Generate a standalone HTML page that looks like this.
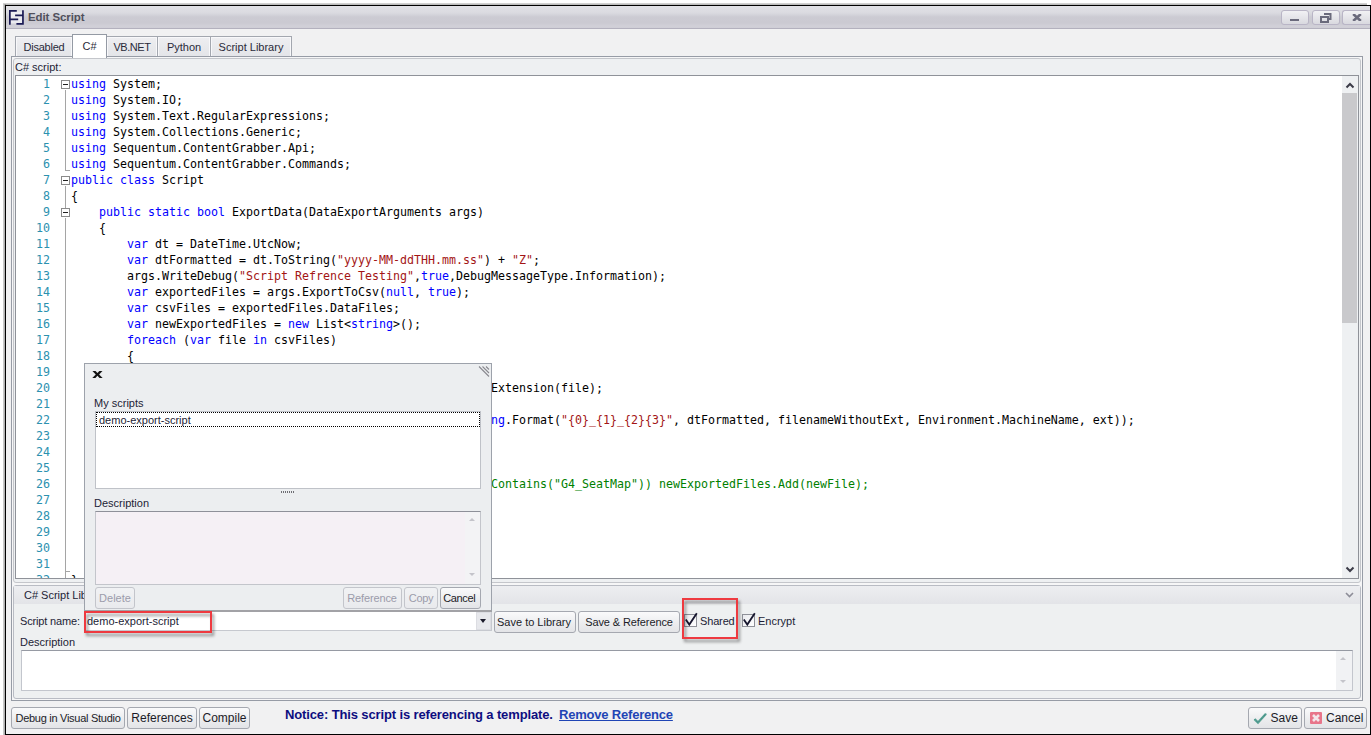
<!DOCTYPE html>
<html>
<head>
<meta charset="utf-8">
<title>Edit Script</title>
<style>
html,body{margin:0;padding:0;background:#fff;}
body{width:1371px;height:735px;position:relative;overflow:hidden;font-family:"Liberation Sans",sans-serif;font-size:11px;color:#1d1d36;}
*{box-sizing:border-box;}
.abs{position:absolute;}
#win{position:absolute;left:5px;top:5px;width:1366px;height:730px;border:1px solid #000;background:#f1f1f2;}
/* everything inside uses page coords via #page */
#page{position:absolute;left:0;top:0;width:1371px;height:735px;}
#title{left:6px;top:6px;width:1364px;height:23px;background:linear-gradient(#e2e2e7 0,#dadae0 7px,#cccbd3 11px,#cbcad2 17px,#d1d0d8 20px,#cfced6 22px);border-bottom:1px solid #b3b1be;}
#title .txt{left:22px;top:5px;font-weight:bold;font-size:11.5px;color:#50505c;letter-spacing:-0.1px;}
.cap{position:absolute;top:4px;height:15px;width:28px;border:1px solid #b9b5c6;border-radius:3px;background:linear-gradient(#f1f1f4,#d9d9df);}
.tab{position:absolute;border:1px solid #a3a7af;border-bottom:none;background:linear-gradient(#eeeef1,#e3e4e8);box-shadow:inset 1px 1px 0 #f8f8fa,inset -1px 0 0 #f8f8fa;text-align:center;color:#2a2a3a;}
.btn{position:absolute;border:1px solid #a5a8b0;border-radius:3px;background:linear-gradient(#fafafb,#ebecee 60%,#e3e4e7);text-align:center;color:#1c1c28;white-space:nowrap;}
.btn.dis{color:#9c9cab;border-color:#c3c5cb;background:linear-gradient(#f1f2f4,#e9eaed);}
#editor{left:15px;top:75px;width:1344px;height:504px;border:1px solid #8f9299;background:#fff;overflow:hidden;}
.ln,.cl{position:absolute;font-family:"DejaVu Sans Mono","Liberation Mono",monospace;font-size:11.63px;line-height:16px;height:16px;white-space:pre;}
.ln{left:0;width:34px;text-align:right;color:#2b91af;}
.cl{left:55px;color:#000;}
.fold{width:9px;height:9px;border:1px solid #8a8a8a;background:#fff;}
.fold:after{content:"";position:absolute;left:1px;top:3px;width:5px;height:1px;background:#222;}
.chk{width:13px;height:13px;border:1px solid #8e9098;background:linear-gradient(135deg,#e9eaee,#fff);}
.redbox{position:absolute;border:2px solid #ee3a40;filter:drop-shadow(2px 3px 1.5px rgba(0,0,0,.42));}
.t{white-space:nowrap;}
.kw{color:#0000ff;}
.s{color:#a31515;}
.c{color:#008000;}
</style>
</head>
<body>
<div class="abs" style="left:3px;top:3px;width:1364px;height:3px;background:linear-gradient(#dcdcdc,#9c9c9c);"></div><div class="abs" style="left:3px;top:4px;width:3px;height:731px;background:linear-gradient(90deg,#d4d4d4,#8c8c8c);"></div>
<div id="win"></div>
<div id="page">
  <!-- title bar -->
  <div id="title" class="abs">
    <svg class="abs" style="left:3px;top:4px" width="16" height="16" viewBox="0 0 16 16"><rect x="1.5" y="1.5" width="12" height="12" fill="#f4f4f8" opacity=".75"/><path d="M0 0.8H7.8 M0.85 0V14.7 M6.1 5.35H14.8 M0.8 9.45H9.2 M13.95 0.3V14.7 M7.4 13.95H14.8" fill="none" stroke="#1a1a55" stroke-width="1.7"/></svg>
    <div class="abs txt">Edit Script</div>
    <div class="cap" style="left:1275px"><div class="abs" style="left:8px;top:8px;width:9px;height:2px;background:#6a6a7c"></div></div>
    <div class="cap" style="left:1305.5px">
      <svg class="abs" style="left:7px;top:1.5px" width="12" height="10" viewBox="0 0 12 10"><path d="M4 1H10.5V6H8.5 M1 4H8V9H1Z" fill="none" stroke="#6a6a7c" stroke-width="2"/></svg>
    </div>
    <div class="cap" style="left:1336px;border-right:none;border-radius:3px 0 0 3px;">
      <svg class="abs" style="left:8.5px;top:3px" width="10" height="7" viewBox="0 0 10 7"><path d="M1.2 0L8.8 7M8.8 0L1.2 7" fill="none" stroke="#6a6a7c" stroke-width="2.6"/></svg>
    </div>
  </div>

  <!-- tabs -->
  <div class="tab" style="left:15px;top:36px;width:58px;height:21px;line-height:20px;letter-spacing:-0.25px;">Disabled</div>
  <div class="tab" style="left:106px;top:36px;width:52px;height:21px;line-height:20px;letter-spacing:-0.45px;">VB.NET</div>
  <div class="tab" style="left:157px;top:36px;width:54px;height:21px;line-height:20px;">Python</div>
  <div class="tab" style="left:210px;top:36px;width:82px;height:21px;line-height:20px;">Script Library</div>
  <!-- tab panel -->
  <div class="abs" style="left:11px;top:56px;width:1352px;height:645px;border:1px solid #979ca6;background:#f6f6f7;"></div>
  <div class="abs" style="left:13px;top:58px;width:1348px;height:525px;border:1px solid #c4c6cb;border-radius:3px;background:#eef0f2;"></div>
  <div class="tab" style="left:72px;top:34px;width:35px;height:24px;line-height:22px;background:#fff;box-shadow:none;border-color:#949aa4;">C#</div>
  <div class="abs" style="left:15px;top:61px;">C# script:</div>

  <!-- editor -->
  <div id="editor" class="abs">
    <div class="abs" id="codewrap" style="left:0;top:0px;width:1326px;height:502px;overflow:hidden">
<div class="ln" style="top:0px">1</div><div class="cl" style="top:0px"><span class="kw">using</span> System;</div>
<div class="ln" style="top:16px">2</div><div class="cl" style="top:16px"><span class="kw">using</span> System.IO;</div>
<div class="ln" style="top:32px">3</div><div class="cl" style="top:32px"><span class="kw">using</span> System.Text.RegularExpressions;</div>
<div class="ln" style="top:48px">4</div><div class="cl" style="top:48px"><span class="kw">using</span> System.Collections.Generic;</div>
<div class="ln" style="top:64px">5</div><div class="cl" style="top:64px"><span class="kw">using</span> Sequentum.ContentGrabber.Api;</div>
<div class="ln" style="top:80px">6</div><div class="cl" style="top:80px"><span class="kw">using</span> Sequentum.ContentGrabber.Commands;</div>
<div class="ln" style="top:96px">7</div><div class="cl" style="top:96px"><span class="kw">public class</span> Script</div>
<div class="ln" style="top:112px">8</div><div class="cl" style="top:112px">{</div>
<div class="ln" style="top:128px">9</div><div class="cl" style="top:128px">    <span class="kw">public static bool</span> ExportData(DataExportArguments args)</div>
<div class="ln" style="top:144px">10</div><div class="cl" style="top:144px">    {</div>
<div class="ln" style="top:160px">11</div><div class="cl" style="top:160px">        <span class="kw">var</span> dt = DateTime.UtcNow;</div>
<div class="ln" style="top:176px">12</div><div class="cl" style="top:176px">        <span class="kw">var</span> dtFormatted = dt.ToString(<span class="s">&quot;yyyy-MM-ddTHH.mm.ss&quot;</span>) + <span class="s">&quot;Z&quot;</span>;</div>
<div class="ln" style="top:192px">13</div><div class="cl" style="top:192px">        args.WriteDebug(<span class="s">&quot;Script Refrence Testing&quot;</span>,<span class="kw">true</span>,DebugMessageType.Information);</div>
<div class="ln" style="top:208px">14</div><div class="cl" style="top:208px">        <span class="kw">var</span> exportedFiles = args.ExportToCsv(<span class="kw">null</span>, <span class="kw">true</span>);</div>
<div class="ln" style="top:224px">15</div><div class="cl" style="top:224px">        <span class="kw">var</span> csvFiles = exportedFiles.DataFiles;</div>
<div class="ln" style="top:240px">16</div><div class="cl" style="top:240px">        <span class="kw">var</span> newExportedFiles = <span class="kw">new</span> List&lt;<span class="kw">string</span>&gt;();</div>
<div class="ln" style="top:256px">17</div><div class="cl" style="top:256px">        <span class="kw">foreach</span> (<span class="kw">var</span> file <span class="kw">in</span> csvFiles)</div>
<div class="ln" style="top:272px">18</div><div class="cl" style="top:272px">        {</div>
<div class="ln" style="top:288px">19</div><div class="cl" style="top:288px">            <span class="kw">var</span> ext = Path.GetExtension(file);</div>
<div class="ln" style="top:304px">20</div><div class="cl" style="top:304px">            <span class="kw">var</span> filenameWithoutExt = Path.GetFileNameWithoutExtension(file);</div>
<div class="ln" style="top:320px">21</div><div class="cl" style="top:320px"></div>
<div class="ln" style="top:336px">22</div><div class="cl" style="top:336px">            <span class="kw">var</span> newFile = Path.Combine(args.ExportPath, <span class="kw">string</span>.Format(<span class="s">&quot;{0}_{1}_{2}{3}&quot;</span>, dtFormatted, filenameWithoutExt, Environment.MachineName, ext));</div>
<div class="ln" style="top:352px">23</div><div class="cl" style="top:352px">            File.Move(file, newFile);</div>
<div class="ln" style="top:368px">24</div><div class="cl" style="top:368px"></div>
<div class="ln" style="top:384px">25</div><div class="cl" style="top:384px"></div>
<div class="ln" style="top:400px">26</div><div class="cl" style="top:400px">            <span class="c">//                       if (!newFile.ToLower().Contains(&quot;G4_SeatMap&quot;)) newExportedFiles.Add(newFile);</span></div>
<div class="ln" style="top:416px">27</div><div class="cl" style="top:416px"></div>
<div class="ln" style="top:432px">28</div><div class="cl" style="top:432px">        }</div>
<div class="ln" style="top:448px">29</div><div class="cl" style="top:448px">        <span class="kw">return true</span>;</div>
<div class="ln" style="top:464px">30</div><div class="cl" style="top:464px">    }</div>
<div class="ln" style="top:480px">31</div><div class="cl" style="top:480px"></div>
<div class="ln" style="top:496px">32</div><div class="cl" style="top:496px">}</div>
      <!-- fold lines -->
      <div class="abs" style="left:49px;top:14px;width:1px;height:81px;background:#a5a5a5"></div>
      <div class="abs" style="left:49px;top:94px;width:5px;height:1px;background:#a5a5a5"></div>
      <div class="abs" style="left:49px;top:110px;width:1px;height:23px;background:#a5a5a5"></div>
      <div class="abs" style="left:49px;top:142px;width:1px;height:362px;background:#a5a5a5"></div>
      <div class="abs" style="left:49px;top:495px;width:5px;height:1px;background:#a5a5a5"></div>
      <div class="abs fold" style="left:45px;top:4px;"></div>
      <div class="abs fold" style="left:45px;top:100px;"></div>
      <div class="abs fold" style="left:45px;top:132px;"></div>
    </div>
    <!-- scrollbar -->
    <div class="abs" style="left:1326px;top:0;width:16px;height:502px;background:#eef0f2;"></div>
    <div class="abs" style="left:1326px;top:17px;width:15px;height:230px;background:#c9c9cc;"></div>
    <svg class="abs" style="left:1329px;top:6px" width="10" height="7" viewBox="0 0 10 7"><path d="M1.5 5.5L5 2L8.5 5.5" fill="none" stroke="#3c3c48" stroke-width="2"/></svg>
    <svg class="abs" style="left:1329px;top:490px" width="10" height="7" viewBox="0 0 10 7"><path d="M1.5 1.5L5 5L8.5 1.5" fill="none" stroke="#3c3c48" stroke-width="2"/></svg>
  </div>

  <!-- library panel -->
  <div class="abs" style="left:13px;top:585px;width:1348px;height:114px;border:1px solid #b9bcc4;border-radius:3px;background:#eef0f1;"></div>
  <div class="abs" style="left:14px;top:586px;width:1346px;height:18px;background:linear-gradient(#edeef1,#e3e4e8);"></div>
  <div class="abs" style="left:24px;top:589px;">C# Script Library</div>
  <svg class="abs" style="left:1345px;top:592px" width="9" height="6" viewBox="0 0 9 6"><path d="M1 1L4.5 4.5L8 1" fill="none" stroke="#8d8d98" stroke-width="1.6"/></svg>

  <div class="abs" style="left:20px;top:615px;letter-spacing:-0.15px;">Script name:</div>
  <div class="abs" style="left:84px;top:611px;width:408px;height:20px;border:1px solid #c6c9cf;background:#fff;"></div>
  <div class="abs" style="left:476px;top:612px;width:15px;height:18px;background:#e7e8ec;border:1px solid #dcdde2;"></div>
  <div class="abs" style="left:480px;top:619px;width:0;height:0;border-left:3.5px solid transparent;border-right:3.5px solid transparent;border-top:4px solid #1a1a2a;"></div>
  <div class="abs" style="left:87px;top:615px;">demo-export-script</div>
  <div class="btn" style="left:494px;top:611px;width:82px;height:22px;line-height:20px;padding-right:2px;">Save to Library</div>
  <div class="btn" style="left:578px;top:611px;width:102px;height:22px;line-height:20px;letter-spacing:-0.1px;">Save &amp; Reference</div>
  <div class="abs chk" style="left:684px;top:614px;"></div>
  <svg class="abs" style="left:684px;top:611px" width="16" height="17" viewBox="0 0 16 17"><path d="M1.8 8.6L5.3 13.6L12.8 2.2" fill="none" stroke="#16162e" stroke-width="1.8" stroke-linejoin="miter"/></svg>
  <div class="abs" style="left:700px;top:615px;letter-spacing:-0.15px;">Shared</div>
  <div class="abs chk" style="left:742px;top:614px;"></div>
  <svg class="abs" style="left:742px;top:611px" width="16" height="17" viewBox="0 0 16 17"><path d="M1.8 8.6L5.3 13.6L12.8 2.2" fill="none" stroke="#16162e" stroke-width="1.8" stroke-linejoin="miter"/></svg>
  <div class="abs" style="left:758px;top:615px;">Encrypt</div>
  <div class="abs" style="left:20px;top:636px;">Description</div>
  <div class="abs" style="left:21px;top:650px;width:1332px;height:41px;border:1px solid #c3c6cd;border-top-color:#969aa3;background:#fff;"></div>
  <div class="abs" style="left:1336px;top:651px;width:16px;height:39px;background:#f1f2f4;"></div>
  <div class="abs" style="left:1340px;top:657px;width:0;height:0;border-left:3px solid transparent;border-right:3px solid transparent;border-bottom:3.5px solid #c4c4ca;"></div>
  <div class="abs" style="left:1340px;top:680px;width:0;height:0;border-left:3px solid transparent;border-right:3px solid transparent;border-top:3.5px solid #c4c4ca;"></div>

  <!-- bottom buttons -->
  <div class="btn" style="left:11px;top:707px;width:114px;height:22px;line-height:20px;letter-spacing:-0.28px;">Debug in Visual Studio</div>
  <div class="btn" style="left:127px;top:707px;width:70px;height:22px;line-height:20px;font-size:12px;">References</div>
  <div class="btn" style="left:199px;top:707px;width:51px;height:22px;line-height:20px;font-size:12px;">Compile</div>
  <div class="abs" style="left:285px;top:707px;font-weight:bold;font-size:13px;color:#0d0d80;white-space:nowrap;letter-spacing:-0.13px;">Notice: This script is referencing a template.</div>
  <div class="abs" style="left:559px;top:707px;font-weight:bold;font-size:13px;color:#1f45b5;white-space:nowrap;letter-spacing:-0.2px;text-decoration:underline;">Remove Reference</div>
  <div class="btn" style="left:1248px;top:707px;width:54px;height:22px;line-height:21px;font-size:12px;text-align:left;padding-left:21.5px;">Save<svg class="abs" style="left:4px;top:4px" width="15" height="13" viewBox="0 0 15 13"><path d="M1.5 7.2L5 10.6L13 1.8" fill="none" stroke="#5aa595" stroke-width="2.4"/><path d="M1.5 7.2L5 10.6L13 1.8" fill="none" stroke="#3d7f86" stroke-width="1" stroke-dasharray="1 1"/></svg></div>
  <div class="btn" style="left:1304px;top:707px;width:63px;height:22px;line-height:21px;font-size:12px;text-align:left;padding-left:21px;">Cancel<svg class="abs" style="left:5px;top:4px" width="12" height="12" viewBox="0 0 12 12"><rect x="0" y="0" width="12" height="12" rx="1" fill="#e8758a"/><path d="M3 3L9 9M9 3L3 9" stroke="#f3e6ea" stroke-width="2.6" fill="none"/></svg></div>

  <!-- popup -->
  <div class="abs" style="left:84px;top:363px;width:408px;height:249px;border:1px solid #9da2ab;border-bottom:2px solid #a2a2a6;background:#eceef0;"></div>
  <div class="abs" style="left:91.5px;top:366px;font-family:'DejaVu Sans','Liberation Sans',sans-serif;font-weight:bold;font-size:13px;line-height:16px;color:#111;transform:scaleX(1.3);transform-origin:0 0;">x</div>
  <svg class="abs" style="left:478px;top:365px" width="12" height="12" viewBox="0 0 12 12"><path d="M1 1.5L11 11.5M4.5 1.5L11 8M8 1.5L11 4.5" fill="none" stroke="#8a8a90" stroke-width="1.1"/></svg>
  <div class="abs" style="left:94px;top:397px;">My scripts</div>
  <div class="abs" style="left:95px;top:411px;width:386px;height:78px;border:1px solid #bfc2c8;background:#fff;"></div>
  <div class="abs" style="left:96px;top:412px;width:384px;height:15px;border:1px dotted #000;"></div>
  <div class="abs" style="left:99px;top:414px;">demo-export-script</div>
  <div class="abs" style="left:281px;top:491px;width:13px;height:2px;background:repeating-linear-gradient(90deg,#6e6e74 0,#6e6e74 1px,transparent 1px,transparent 2px);"></div>
  <div class="abs" style="left:94px;top:497px;">Description</div>
  <div class="abs" style="left:95px;top:511px;width:386px;height:74px;border:1px solid #c3c5cb;border-top-color:#8e9099;background:#f5f0f5;"></div>
  <div class="abs" style="left:465px;top:512px;width:15px;height:72px;background:#f3f3f5;"></div>
  <div class="abs" style="left:469px;top:518px;width:0;height:0;border-left:3px solid transparent;border-right:3px solid transparent;border-bottom:3.5px solid #c4c4ca;"></div>
  <div class="abs" style="left:469px;top:573px;width:0;height:0;border-left:3px solid transparent;border-right:3px solid transparent;border-top:3.5px solid #c4c4ca;"></div>
  <div class="btn dis" style="left:95px;top:587px;width:40px;height:22px;line-height:20px;">Delete</div>
  <div class="btn dis" style="left:343px;top:587px;width:59px;height:22px;line-height:20px;letter-spacing:-0.12px;padding-right:1px;">Reference</div>
  <div class="btn dis" style="left:404px;top:587px;width:34px;height:22px;line-height:20px;letter-spacing:-0.3px;">Copy</div>
  <div class="btn" style="left:440px;top:587px;width:41px;height:22px;line-height:20px;letter-spacing:-0.4px;padding-right:2.5px;">Cancel</div>

  <!-- red highlight boxes -->
  <div class="redbox" style="left:84px;top:611px;width:128px;height:22px;"></div>
  <div class="redbox" style="left:682px;top:598px;width:56px;height:41px;"></div>
</div>
</body>
</html>
